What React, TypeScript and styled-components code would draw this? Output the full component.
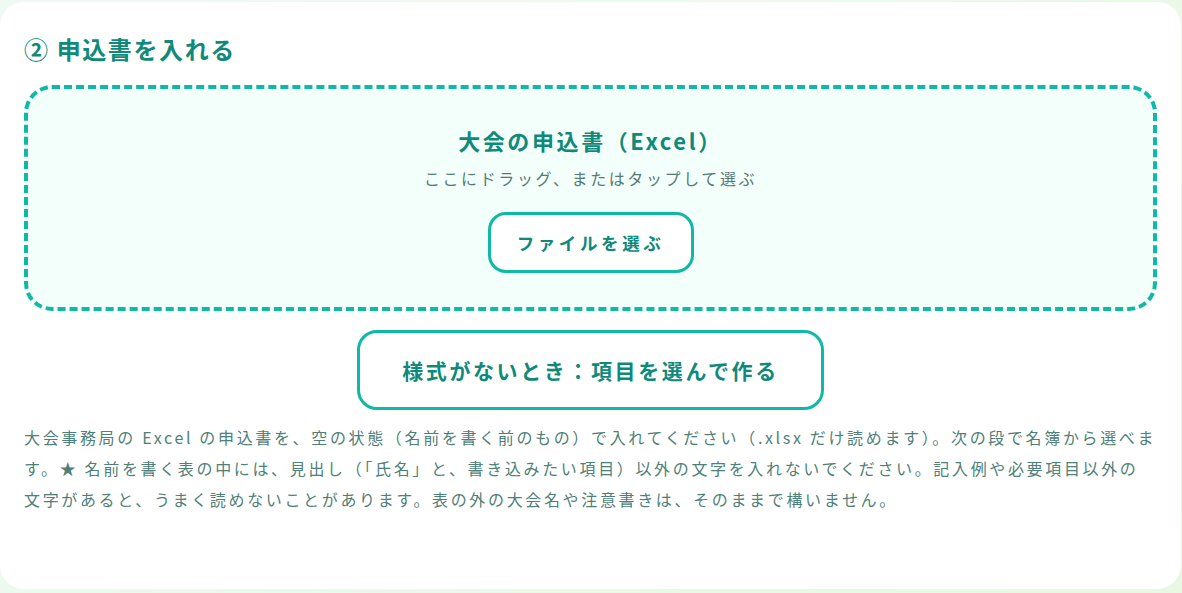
import React from 'react';
import styled, { createGlobalStyle } from 'styled-components';

const GlobalStyle = createGlobalStyle`
	html, body {
		margin: 0;
		padding: 0;
		height: 100%;
		overflow: hidden;
	}
	body {
		background: linear-gradient(135deg, #effaf4 0%, #e8f8e2 100%);
		font-family: "Noto Sans CJK JP", "Noto Sans", sans-serif;
	}
`;

const Card = styled.section`
	box-sizing: border-box;
	margin: 2px 1px 4px 0;
	height: 587px;
	background: #ffffff;
	border-radius: 24px;
	padding: 30px 24px 0 24px;
	display: flex;
	flex-direction: column;
`;

const Heading = styled.h2`
	margin: 0;
	font-size: 24px;
	font-weight: 700;
	letter-spacing: 1.6px;
	line-height: 34px;
	color: #0f8a7a;
`;

const DropZone = styled.div`
	box-sizing: border-box;
	margin-top: 19px;
	width: 1133px;
	height: 226px;
	border: 4px dashed #10b9a5;
	border-radius: 28px;
	background: #f3fffb;
	display: flex;
	flex-direction: column;
	align-items: center;
	padding-top: 36px;
`;

const ZoneTitle = styled.div`
	font-size: 22px;
	font-weight: 700;
	letter-spacing: 2.6px;
	line-height: 30px;
	color: #0f8a7a;
`;

const ZoneHint = styled.div`
	margin-top: 12px;
	font-size: 16px;
	letter-spacing: 2.6px;
	line-height: 22px;
	color: #557a75;
`;

const OutlineButton = styled.button<{ $big?: boolean }>`
	box-sizing: border-box;
	background: #ffffff;
	border: 3px solid #10b9a5;
	font-family: inherit;
	font-weight: 700;
	color: #0f8a7a;
	cursor: pointer;
	display: flex;
	align-items: center;
	justify-content: center;
	width: ${(p) => (p.$big ? '467px' : '206px')};
	height: ${(p) => (p.$big ? '80px' : '61px')};
	border-radius: ${(p) => (p.$big ? '20px' : '18px')};
	font-size: ${(p) => (p.$big ? '21px' : '17.5px')};
	letter-spacing: ${(p) => (p.$big ? '2.6px' : '3.6px')};
	padding: 0;
`;

const PickButton = styled(OutlineButton)`
	margin-top: 23px;
`;

const TemplateRow = styled.div`
	display: flex;
	justify-content: center;
	margin-top: 19px;
	width: 1133px;
`;

const Note = styled.p`
	margin: 12px 0 0 0;
	font-size: 16px;
	letter-spacing: 2.65px;
	line-height: 31px;
	color: #4f7f79;
`;

const App = () => {
	return (
		<>
			<GlobalStyle />
			<Card>
				<Heading>② 申込書を入れる</Heading>
				<DropZone>
					<ZoneTitle>大会の申込書（Excel）</ZoneTitle>
					<ZoneHint>ここにドラッグ、またはタップして選ぶ</ZoneHint>
					<PickButton>ファイルを選ぶ</PickButton>
				</DropZone>
				<TemplateRow>
					<OutlineButton $big>様式がないとき：項目を選んで作る</OutlineButton>
				</TemplateRow>
				<Note>
					大会事務局の Excel の申込書を、空の状態（名前を書く前のもの）で入れてください（.xlsx だけ読めます）。次の段で名簿から選べます。★ 名前を書く表の中には、見出し（「氏名」と、書き込みたい項目）以外の文字を入れないでください。記入例や必要項目以外の文字があると、うまく読めないことがあります。表の外の大会名や注意書きは、そのままで構いません。
				</Note>
			</Card>
		</>
	);
};

export default App;
